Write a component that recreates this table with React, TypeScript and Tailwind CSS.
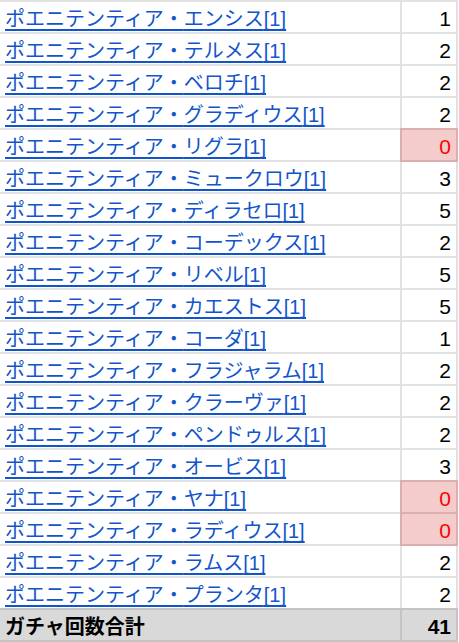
import React from 'react';

const rows: { name: string; count: number }[] = [
  { name: 'エンシス', count: 1 },
  { name: 'テルメス', count: 2 },
  { name: 'ベロチ', count: 2 },
  { name: 'グラディウス', count: 2 },
  { name: 'リグラ', count: 0 },
  { name: 'ミュークロウ', count: 3 },
  { name: 'ディラセロ', count: 5 },
  { name: 'コーデックス', count: 2 },
  { name: 'リベル', count: 5 },
  { name: 'カエストス', count: 5 },
  { name: 'コーダ', count: 1 },
  { name: 'フラジャラム', count: 2 },
  { name: 'クラーヴァ', count: 2 },
  { name: 'ペンドゥルス', count: 2 },
  { name: 'オービス', count: 3 },
  { name: 'ヤナ', count: 0 },
  { name: 'ラディウス', count: 0 },
  { name: 'ラムス', count: 2 },
  { name: 'プランタ', count: 2 },
];

const font = "font-['Liberation_Sans','Noto_Sans_CJK_JP',sans-serif]";

export default function App() {
  const total = rows.reduce((s, r) => s + r.count, 0);

  return (
    <div className={`w-[459px] h-[642px] bg-white ${font}`}>
      <div className="grid w-[458px] grid-cols-[400px_54px] auto-rows-[30px] gap-[2px] bg-[#e2e2e2] pt-[2px] pr-[2px] pb-[2px]">
        {rows.map((r) => (
          <React.Fragment key={r.name}>
            <div className="flex items-end bg-white pl-[5px] pb-[1px] overflow-hidden whitespace-nowrap">
              <a
                href="#"
                className="text-[20px] leading-[24px] text-[#1155cc] underline decoration-2 underline-offset-[3px] [text-decoration-skip-ink:none]"
              >
                ポエニテンティア・{r.name}[1]
              </a>
            </div>
            {r.count === 0 ? (
              <div className="relative flex items-end justify-end bg-[#f4cccc] pr-[5px] pb-[1px] text-[21px] leading-[24px] text-[#ff0000] outline-2 outline-[#dcaeae]">
                0
              </div>
            ) : (
              <div className="flex items-end justify-end bg-white pr-[5px] pb-[1px] text-[21px] leading-[24px] text-black">
                {r.count}
              </div>
            )}
          </React.Fragment>
        ))}
        <div className="flex items-end bg-[#d9d9d9] pl-[5px] pb-[1px] text-[20px] leading-[24px] font-bold text-black outline-2 outline-[#c4c4c4]">
          ガチャ回数合計
        </div>
        <div className="flex items-end justify-end bg-[#d9d9d9] pr-[5px] pb-[1px] text-[21px] leading-[24px] font-bold text-black outline-2 outline-[#c4c4c4]">
          {total}
        </div>
      </div>
    </div>
  );
}
